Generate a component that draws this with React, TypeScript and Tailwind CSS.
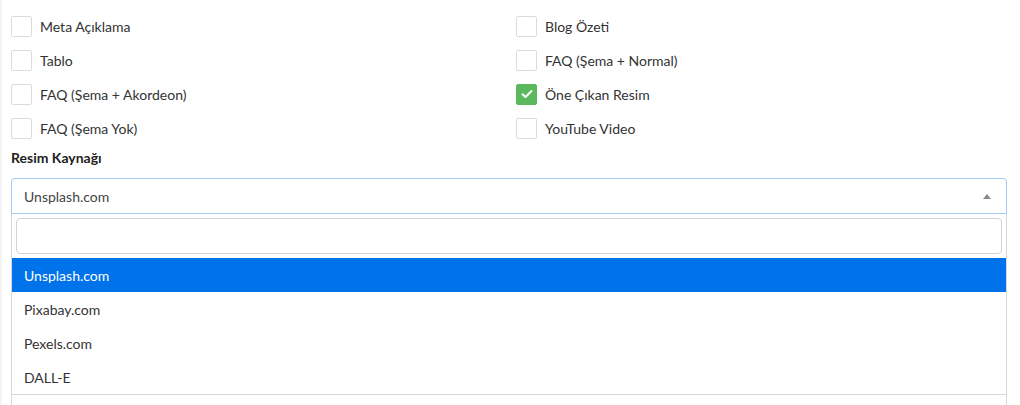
import React, { useState } from 'react';

const options = [
  { key: 'meta', label: 'Meta Açıklama' },
  { key: 'summary', label: 'Blog Özeti' },
  { key: 'table', label: 'Tablo' },
  { key: 'faqNormal', label: 'FAQ (Şema + Normal)' },
  { key: 'faqAccordion', label: 'FAQ (Şema + Akordeon)' },
  { key: 'featured', label: 'Öne Çıkan Resim' },
  { key: 'faqNone', label: 'FAQ (Şema Yok)' },
  { key: 'youtube', label: 'YouTube Video' },
];

const sources = ['Unsplash.com', 'Pixabay.com', 'Pexels.com', 'DALL-E'];

function Checkbox({ checked, label, onChange }: { checked: boolean; label: string; onChange: () => void }) {
  return (
    <label className="flex h-[34px] cursor-pointer items-center gap-2">
      <span
        onClick={onChange}
        className={
          checked
            ? 'flex h-[21px] w-[21px] items-center justify-center rounded-[2px] border border-[#5cb85c] bg-[#5cb85c]'
            : 'flex h-[21px] w-[21px] items-center justify-center rounded-[2px] border border-[#dcdcdc] bg-white'
        }
      >
        {checked && (
          <svg width="12" height="10" viewBox="0 0 12 10" fill="none">
            <path d="M1.5 5.2 4.5 8 10.5 2" stroke="white" strokeWidth="2" strokeLinecap="round" strokeLinejoin="round" />
          </svg>
        )}
      </span>
      <span className="text-[14px] text-[#333]">{label}</span>
    </label>
  );
}

export default function App() {
  const [checked, setChecked] = useState<Record<string, boolean>>({ featured: true });
  const [source, setSource] = useState('Unsplash.com');
  const [search, setSearch] = useState('');

  return (
    <div className="min-h-[405px] border-l-[2px] border-[#f4f4f4] bg-white pl-[9px] pr-[13px] pt-[9px] font-['Lato','Noto_Sans',sans-serif]">
      <div className="grid grid-cols-2 gap-x-[14px]">
        {options.map((o) => (
          <Checkbox
            key={o.key}
            label={o.label}
            checked={!!checked[o.key]}
            onChange={() => setChecked({ ...checked, [o.key]: !checked[o.key] })}
          />
        ))}
      </div>

      <div className="mb-[10px] mt-[3px] h-[20px] text-[14px] font-bold leading-[20px] text-[#222]">Resim Kaynağı</div>

      <div className="flex h-[36px] items-center justify-between rounded-t-[4px] border border-[#a6c8f2] px-3">
        <span className="text-[14px] text-[#444]">{source}</span>
        <span className="mr-[3px] h-0 w-0 border-x-[4px] border-b-[5px] border-x-transparent border-b-[#888]" />
      </div>

      <div className="border-x border-b border-[#d4d8dd] bg-white">
        <div className="p-1">
          <input
            value={search}
            onChange={(e) => setSearch(e.target.value)}
            className="block h-[36px] w-full rounded-[4px] border border-[#cfd4da] px-2 text-[14px] outline-none"
          />
        </div>
        {sources
          .filter((s) => s.toLowerCase().includes(search.toLowerCase()))
          .map((s) => (
            <div
              key={s}
              onClick={() => setSource(s)}
              className={
                s === source
                  ? 'flex h-[34px] items-center bg-[#0073ea] pl-3 text-[14px] text-white'
                  : 'flex h-[34px] items-center pl-3 text-[14px] text-[#333]'
              }
            >
              {s}
            </div>
          ))}
      </div>
      <div className="h-[10px] border-x border-[#d4d8dd]" />
    </div>
  );
}
